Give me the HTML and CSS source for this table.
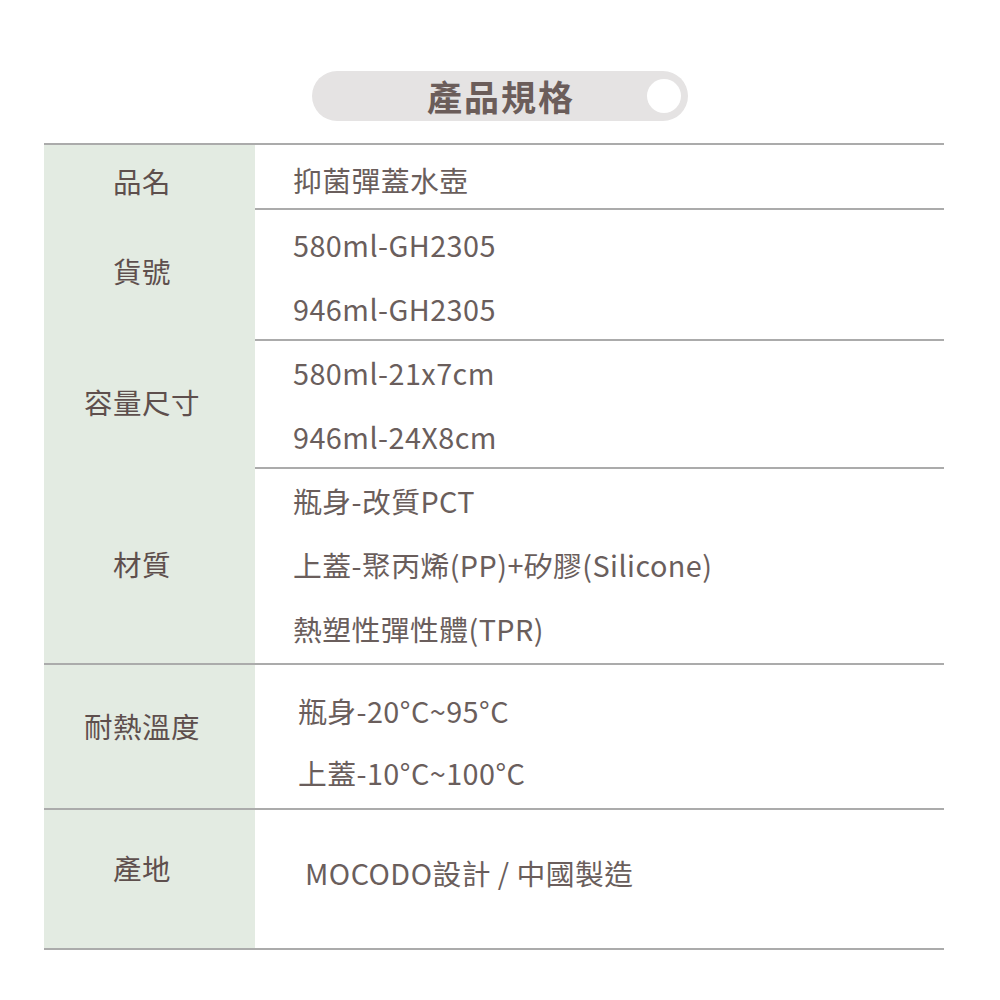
FILE: index.html
```html
<!DOCTYPE html>
<html lang="zh-Hant">
<head>
<meta charset="utf-8">
<link rel="stylesheet" href="styles.css">
</head>
<body>
<div class="page">
  <div class="title-wrap">
    <div class="pill">
      <span class="pill-text">產品規格</span>
      <span class="pill-dot"></span>
    </div>
  </div>
  <div class="table">
    <div class="row r1">
      <div class="label">品名</div>
      <div class="value"><div class="line">抑菌彈蓋水壺</div></div>
    </div>
    <div class="row r2">
      <div class="label">貨號</div>
      <div class="value"><div class="line">580ml-GH2305</div><div class="line">946ml-GH2305</div></div>
    </div>
    <div class="row r3">
      <div class="label">容量尺寸</div>
      <div class="value"><div class="line">580ml-21x7cm</div><div class="line">946ml-24X8cm</div></div>
    </div>
    <div class="row r4">
      <div class="label">材質</div>
      <div class="value"><div class="line">瓶身-改質PCT</div><div class="line">上蓋-聚丙烯(PP)+矽膠(Silicone)</div><div class="line">熱塑性彈性體(TPR)</div></div>
    </div>
    <div class="row r5">
      <div class="label">耐熱溫度</div>
      <div class="value v5"><div class="line l5">瓶身-20°C~95°C</div><div class="line l5">上蓋-10°C~100°C</div></div>
    </div>
    <div class="row r6">
      <div class="label">產地</div>
      <div class="value v6"><div class="line">MOCODO設計 / 中國製造</div></div>
    </div>
  </div>
</div>
</body>
</html>
```
FILE: styles.css
```css
html, body {
  margin: 0;
  padding: 0;
  background: #ffffff;
}
body {
  font-family: "Noto Sans CJK TC", "Noto Sans", sans-serif;
  color: #665a58;
}
.page {
  width: 1000px;
  height: 1000px;
  padding-top: 71px;
  box-sizing: border-box;
}
.title-wrap {
  display: flex;
  justify-content: center;
}
.pill {
  position: relative;
  width: 376px;
  height: 50px;
  border-radius: 25px;
  background: #e5e3e3;
  display: flex;
  align-items: center;
  justify-content: center;
}
.pill-text {
  font-size: 35px;
  font-weight: 700;
  color: #6b5d5a;
  letter-spacing: 2px;
  line-height: 50px;
  padding-left: 2px;
}
.pill-dot {
  position: absolute;
  right: 7px;
  top: 8px;
  width: 34px;
  height: 34px;
  border-radius: 50%;
  background: #ffffff;
}
.table {
  margin: 22px 56px 0 44px;
  border-bottom: 2px solid #ababab;
}
.row {
  display: grid;
  grid-template-columns: 211px 1fr;
  border-top: 2px solid #ababab;
  box-sizing: border-box;
}
.label {
  background: #e3ebe2;
  display: flex;
  align-items: center;
  justify-content: center;
  font-size: 28.5px;
  font-weight: 400;
  color: #5e4f4d;
  letter-spacing: 0.5px;
  padding-right: 15px;
}
.value {
  padding-left: 38px;
  padding-top: 3px;
  font-size: 28.8px;
  font-weight: 400;
  color: #6a5e5c;
  letter-spacing: 0.45px;
}
.line {
  height: 64px;
  line-height: 64px;
  white-space: nowrap;
}
.r1 { height: 65px; }
.r2 { height: 131px; }
.r3 { height: 128px; }
.r4 { height: 196px; }
.r5 { height: 145px; }
.r6 { height: 140px; }
.r3 .value, .r4 .value { padding-top: 0; }
.r1 .label { padding-top: 3px; }
.r2 .label { padding-bottom: 11px; }
.r3 .label { padding-bottom: 7px; }
.r4 .label { padding-bottom: 5px; }
.r5 .label { padding-bottom: 22px; }
.r6 .label { padding-bottom: 23px; }
.v5 { padding-left: 43px; padding-top: 15px; }
.l5 { height: 62px; line-height: 62px; }
.v6 { padding-left: 50px; padding-top: 31px; }
```
